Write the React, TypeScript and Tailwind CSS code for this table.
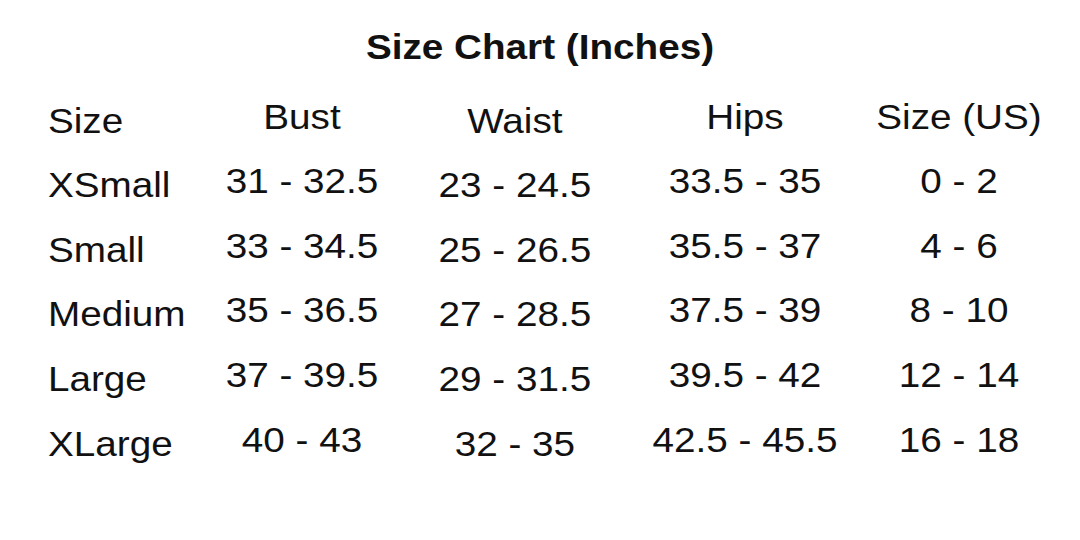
import React from 'react';

type Column = {
  head: string;
  values: string[];
  width: string;
  align: 'left' | 'center';
  lower: boolean;
};

const COLUMNS: Column[] = [
  {
    head: 'Size',
    values: ['XSmall', 'Small', 'Medium', 'Large', 'XLarge'],
    width: 'w-[130px]',
    align: 'left',
    lower: true,
  },
  {
    head: 'Bust',
    values: ['31 - 32.5', '33 - 34.5', '35 - 36.5', '37 - 39.5', '40 - 43'],
    width: 'w-[199.8px]',
    align: 'center',
    lower: false,
  },
  {
    head: 'Waist',
    values: ['23 - 24.5', '25 - 26.5', '27 - 28.5', '29 - 31.5', '32 - 35'],
    width: 'w-[185.6px]',
    align: 'center',
    lower: true,
  },
  {
    head: 'Hips',
    values: ['33.5 - 35', '35.5 - 37', '37.5 - 39', '39.5 - 42', '42.5 - 45.5'],
    width: 'w-[230.8px]',
    align: 'center',
    lower: false,
  },
  {
    head: 'Size (US)',
    values: ['0 - 2', '4 - 6', '8 - 10', '12 - 14', '16 - 18'],
    width: 'w-[156.6px]',
    align: 'center',
    lower: false,
  },
];

export default function App() {
  return (
    <div className="w-[1080px] h-[540px] overflow-hidden bg-white text-[#111]">
      {/* the chart is drawn a bit wider than Arial, so stretch it */}
      <div className="w-[977.4px] origin-left scale-x-[1.105] font-['Liberation_Sans',Arial,sans-serif] text-[35px]">
        <h1 className="pt-[27px] text-center font-bold leading-[40px]">
          Size Chart (Inches)
        </h1>

        <div className="mt-[17.6px] flex pl-[43.4px]">
          {COLUMNS.map((col) => (
            <div
              key={col.head}
              className={`flex flex-col leading-[64.6px] whitespace-nowrap ${col.width} ${
                col.align === 'left' ? 'text-left' : 'text-center'
              } ${col.lower ? 'pt-[4px]' : ''}`}
            >
              <div>{col.head}</div>
              {col.values.map((v) => (
                <div key={v}>{v}</div>
              ))}
            </div>
          ))}
        </div>
      </div>
    </div>
  );
}
